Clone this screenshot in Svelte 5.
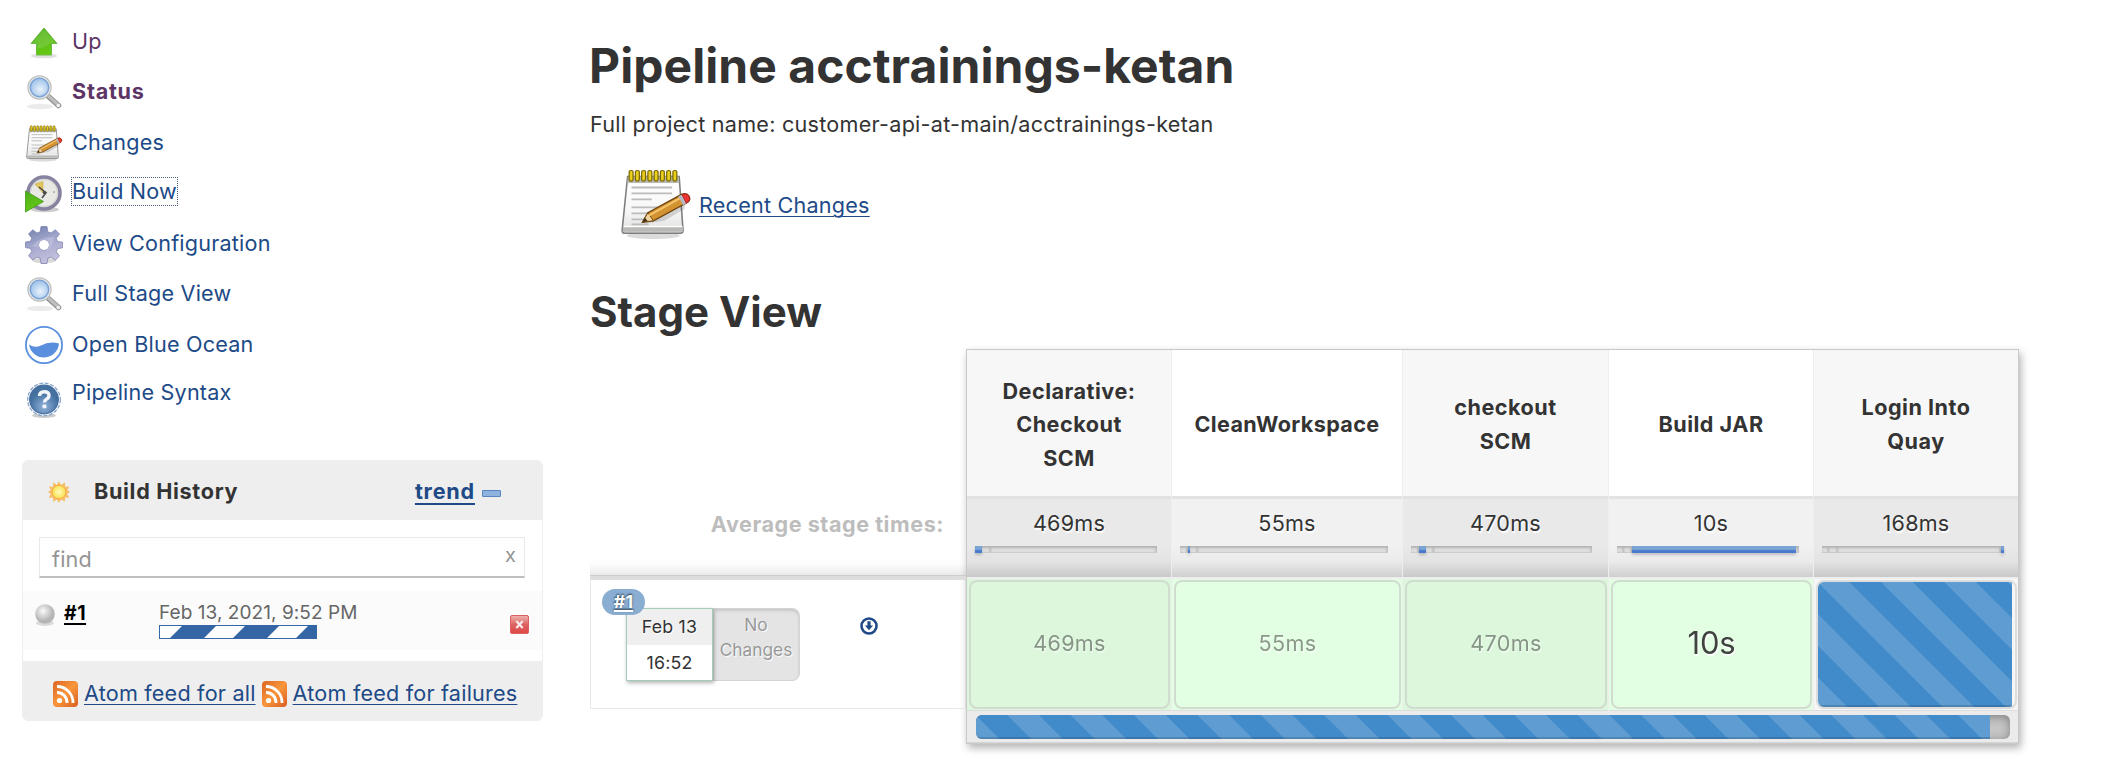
<script>
  const tasks = [
    { label: 'Up', icon: 'up', state: 'visited' },
    { label: 'Status', icon: 'search', state: 'visited current' },
    { label: 'Changes', icon: 'notepad', state: '' },
    { label: 'Build Now', icon: 'clock', state: 'focused' },
    { label: 'View Configuration', icon: 'gear', state: '' },
    { label: 'Full Stage View', icon: 'search', state: '' },
    { label: 'Open Blue Ocean', icon: 'ocean', state: '' },
    { label: 'Pipeline Syntax', icon: 'help', state: '' }
  ];

  // Bar segments: width in pixels; `on` marks the share of the run taken by this stage.
  const stages = [
    { lines: ['Declarative:', 'Checkout', 'SCM'], avg: '469ms', run: '469ms', bar: [{ w: 7, on: true }, { w: 9 }, { w: 166 }] },
    { lines: ['CleanWorkspace'], avg: '55ms', run: '55ms', bar: [{ w: 8 }, { w: 2, on: true }, { w: 8 }, { w: 190 }] },
    { lines: ['checkout', 'SCM'], avg: '470ms', run: '470ms', bar: [{ w: 8 }, { w: 7, on: true }, { w: 8 }, { w: 158 }] },
    { lines: ['Build JAR'], avg: '10s', run: '10s', slow: true, bar: [{ w: 7 }, { w: 8 }, { w: 164, on: true }, { w: 3 }] },
    { lines: ['Login Into', 'Quay'], avg: '168ms', running: true, bar: [{ w: 7 }, { w: 9 }, { w: 163 }, { w: 3, on: true }] }
  ];
  const feeds = ['Atom feed for all', 'Atom feed for failures'];
</script>

{#snippet notepad(width, height)}
  <svg {width} {height} viewBox="0 0 48 48" preserveAspectRatio="none">
    <ellipse cx="22" cy="45" rx="17" ry="2.400" fill="#000" opacity=".14" />
    <path d="M5.500 5h33l2.500 36.500q.2 2-1.800 2H4q-2.200 0-2-2z" fill="url(#paper)" stroke="#7e7e7b" />
    <path d="M5.700 5h32.500l.3 4.500H5.300z" fill="#b8b8b4" />
    <path d="M2.600 38.500h38.200l.2 4H2.300z" fill="#b9bab7" />
    <path d="M3 38.800h37.500" stroke="#fff" />
    <g stroke="#bcbcba" stroke-width="1.200"><path d="M8 12.500h26M8 16.500h26M8 20.500h13M8 26h24M8 30h20M8 34h14M8 37.500h11" /></g>
    <g fill="#e9cf1e" stroke="#7d6900" stroke-width=".8">
      {#each [7.5, 11.5, 15.5, 19.5, 23.5, 27.5, 31.5, 35.5] as x}
        <rect x={x - 1} y="1" width="2.500" height="7.200" rx="1.250" />
      {/each}
    </g>
    <path d="M16 37l5-3 18-9 4-4-1 6-13 8z" fill="#000" opacity=".14" />
    <path d="M15 36l3.500-6.500L40 17.200q2.800-1.400 4.600.9 1.500 2.500-.6 4.400L22 35z" fill="#d39332" stroke="#70450d" stroke-width=".9" />
    <path d="M15 36l3.500-6.500 3.500 5.500z" fill="#efd3a0" stroke="#70450d" stroke-width=".6" />
    <path d="M15 36l1.600-3 1.700 2.200z" fill="#3c2a13" />
    <path d="M19 31.500L39.500 19.500" stroke="#f4c36a" stroke-width="1.400" />
    <path d="M38 18.500l3 6 2.200-1.300-3-5.800z" fill="#b6bac4" />
    <path d="M40.300 17.200q2.800-1.300 4.400.9 1.400 2.600-.8 4.500l-.9.5z" fill="#ec3434" stroke="#a32018" stroke-width=".5" />
  </svg>
{/snippet}

{#snippet taskIcon(name)}
  {#if name === 'notepad'}
    {@render notepad(39, 37)}
  {:else}
    <svg width="38" height="38" viewBox="0 0 38 38">
      {#if name === 'up'}
        <ellipse cx="19" cy="32" rx="13" ry="2.300" fill="#000" opacity=".12" />
        <path d="M19 4L32 19.500h-5.500V31h-15V19.500H6z" fill="url(#green)" stroke="#6cbb45" stroke-width="1" />
        <path d="M19 5.600L8.200 18.500h4.300v6q9-1 13-6h4.300z" fill="#fff" opacity=".13" />
      {:else if name === 'search'}
        <ellipse cx="15" cy="32.500" rx="13" ry="2.800" fill="#000" opacity=".08" />
        <path d="M24 23L33.500 31.500" stroke="#969897" stroke-width="5.600" stroke-linecap="round" />
        <path d="M24 22.700L33.500 31.200" stroke="#bfc0be" stroke-width="3" stroke-linecap="round" />
        <circle cx="33.300" cy="31.500" r="1.800" fill="#f1f1f1" />
        <circle cx="14.500" cy="13.500" r="11.600" fill="#e4e6e5" stroke="#bdbfbe" stroke-width="1.200" />
        <circle cx="14.500" cy="13.500" r="9.200" fill="url(#lens)" stroke="#7ba3d6" stroke-width="1.500" />
      {:else if name === 'clock'}
        <ellipse cx="20" cy="34.500" rx="14" ry="2.800" fill="#000" opacity=".2" />
        <circle cx="19" cy="18" r="16" fill="#e8e8e4" stroke="#85839f" stroke-width="3.600" />
        <circle cx="19" cy="18" r="13.600" fill="none" stroke="#d1d1cd" />
        <path d="M10 9l8-2.500V18z" fill="#e2c65c" stroke="#c4aa4e" stroke-width=".6" />
        <path d="M14 12l6.500 5.500M17 23l4.500-6" stroke="#4c4c4c" stroke-width="1.600" />
        <circle cx="19.500" cy="17.500" r="1.700" fill="#4c4c4c" />
        <circle cx="29" cy="17" r="1" fill="#aaa" />
        <path d="M.5 16L18.500 26.500.5 37z" fill="url(#green)" stroke="#3f9616" stroke-width=".8" />
      {:else if name === 'gear'}
        <ellipse cx="19" cy="34.500" rx="12" ry="2.800" fill="#000" opacity=".15" />
        <g fill="url(#steel)" stroke="#7f85ae" stroke-width=".8">
          <path fill-rule="evenodd" d="M16 .5h6l.8 5.300 3.200 1.300 4.300-3.300 4.200 4.200-3.300 4.300 1.300 3.200 5.100.7v5.600l-5.100.8-1.300 3.200 3.300 4.200-4.200 4.200-4.300-3.200-3.200 1.300-.8 5.200h-6l-.8-5.200-3.200-1.300L7.700 34l-4.200-4.200 3.300-4.200-1.300-3.200-5-.8V16l5-.7 1.300-3.200L3.500 8l4.200-4.200L12 7.100l3.200-1.300zM19 13.800a5.200 5.200 0 1 0 0 10.400 5.200 5.200 0 0 0 0-10.400z" />
        </g>
        <path d="M7 20q7-9 22-9 0 11-12 17 6-3 5-5" fill="#fff" opacity=".2" />
        <circle cx="19" cy="19" r="4.800" fill="#fff" />
      {:else if name === 'ocean'}
        <circle cx="19" cy="19" r="18.100" fill="#fff" stroke="#5a8fde" stroke-width="1.800" />
        <path d="M4 18.500q5.500 3.800 12 1Q24.500 14.800 34 17.500A15.100 15.100 0 0 1 4 18.500z" fill="#5a8fde" />
      {:else}
        <ellipse cx="19" cy="34.500" rx="12" ry="2.500" fill="#000" opacity=".2" />
        <circle cx="19" cy="18.500" r="16.300" fill="#fff" stroke="#86a4ca" stroke-width="1.300" stroke-dasharray="4 1.500" />
        <circle cx="19" cy="18.500" r="14.300" fill="url(#help)" stroke="#416a9e" stroke-width="1.200" />
        <path d="M14.500 15q0-4.300 4.800-4.300 4.700 0 4.700 3.800 0 2.500-2.600 3.800-1.900 1-1.900 3.200" fill="none" stroke="#f2f6fb" stroke-width="3.400" />
        <rect x="17.500" y="23.600" width="3.900" height="3.700" rx=".8" fill="#f2f6fb" />
      {/if}
    </svg>
  {/if}
{/snippet}

<svg class="defs" width="0" height="0" aria-hidden="true">
  <defs>
    <linearGradient id="paper" x2="0" y2="1"><stop offset="0" stop-color="#fff" /><stop offset=".6" stop-color="#f7f7f7" /><stop offset="1" stop-color="#dedede" /></linearGradient>
    <linearGradient id="green" x2=".3" y2="1"><stop offset="0" stop-color="#4caf1e" /><stop offset="1" stop-color="#66c814" /></linearGradient>
    <radialGradient id="lens" cx=".55" cy=".6"><stop offset="0" stop-color="#e9f2fb" /><stop offset="1" stop-color="#a9c9ec" /></radialGradient>
    <linearGradient id="steel" x2=".4" y2="1"><stop offset="0" stop-color="#6d7ca8" /><stop offset=".5" stop-color="#a1a6cc" /><stop offset="1" stop-color="#c3bfdc" /></linearGradient>
    <radialGradient id="help" cy=".75"><stop offset="0" stop-color="#8fb1da" /><stop offset="1" stop-color="#44719f" /></radialGradient>
    <radialGradient id="sun"><stop offset="0" stop-color="#fffbc0" /><stop offset="1" stop-color="#f9e04c" /></radialGradient>
    <radialGradient id="ball" cx=".4" cy=".35"><stop offset="0" stop-color="#fafafa" /><stop offset="1" stop-color="#b5b5b5" /></radialGradient>
    <linearGradient id="rss" y2="1"><stop offset="0" stop-color="#dc6425" /><stop offset=".5" stop-color="#f9963a" /><stop offset="1" stop-color="#d95c22" /></linearGradient>
    <linearGradient id="stop" x2="0" y2="1"><stop offset="0" stop-color="#f0b4b0" /><stop offset=".5" stop-color="#dc6464" /><stop offset="1" stop-color="#e04747" /></linearGradient>
  </defs>
</svg>

<div class="page">
  <aside>
    <nav>
      {#each tasks as task}
        <a class="task {task.state} {task.icon}" href="#top">
          {@render taskIcon(task.icon)}
          <span>{task.label}</span>
        </a>
      {/each}
    </nav>

    <section class="history">
      <header>
        <svg width="24" height="24" viewBox="0 0 24 24">
          <path d="M12 1l2 4 4-2.700.3 4.400 4.200-.2-2.100 3.800L23 12l-2.900 1.900 2.200 3.800-4.100-.1-.4 4.100-3.800-2.200L12 23l-2-3.500-3.800 2.200-.4-4.100-4.100.1 2-3.800L1 12l2.900-1.800-2.100-3.700 4.200.2L6.300 2.300 10 5z" fill="#f8bd68" />
          <circle cx="12" cy="12" r="6.800" fill="url(#sun)" stroke="#f3b04c" stroke-width="1" />
        </svg>
        <h2>Build History</h2>
        <a class="trend" href="#trend">trend</a>
        <i class="collapse"></i>
      </header>
      <div class="find"><span>find</span><b>x</b></div>
      <div class="build">
        <svg class="ball" width="22" height="24" viewBox="0 0 22 24">
          <ellipse cx="11" cy="20" rx="9" ry="3" fill="#000" opacity=".13" />
          <circle cx="11" cy="11" r="9.800" fill="url(#ball)" />
        </svg>
        <a class="num" href="#1">#1</a>
        <div class="when">
          <span>Feb 13, 2021, 9:52 PM</span>
          <svg width="158" height="14" viewBox="0 0 158 14">
            <path d="M0 0h158v14H0z" fill="#3465a4" />
            <path d="M1 1h22L11 13H1zM57 1h29L74 13H45zM120 1h29l-12 12h-29z" fill="#fff" />
          </svg>
        </div>
        <svg class="stop" width="19" height="19" viewBox="0 0 19 19">
          <rect x=".5" y=".5" width="18" height="18" rx="1.500" fill="url(#stop)" stroke="#d9615f" />
          <path d="M6.300 6l6.400 7M12.700 6l-6.400 7" stroke="#fbeaea" stroke-width="2.200" />
        </svg>
      </div>
      <footer>
        {#each feeds as feed}
          <svg width="25" height="26" viewBox="0 0 25 26">
            <rect width="25" height="26" rx="4" fill="url(#rss)" />
            <circle cx="6.500" cy="19.500" r="2.600" fill="#fff" />
            <path d="M4 11.500A9.800 9.800 0 0 1 14 22M4 5.500A16 16 0 0 1 20 22" fill="none" stroke="#fff" stroke-width="2.800" />
          </svg>
          <a href="#feed">{feed}</a>
        {/each}
      </footer>
    </section>
  </aside>

  <main>
    <h1>Pipeline acctrainings-ketan</h1>
    <p class="full">Full project name: customer-api-at-main/acctrainings-ketan</p>
    <div class="recent">
      {@render notepad(75, 71)}
      <a href="#changes">Recent Changes</a>
    </div>
    <h2 class="heading">Stage View</h2>

    <div class="view">
      <div class="left">
        <div class="avglabel">Average stage times:</div>
        <div class="run">
          <div class="stamp"><span class="day">Feb 13</span><span>16:52</span></div>
          <div class="nochange"><span>No</span><span>Changes</span></div>
          <svg width="18" height="18" viewBox="0 0 18 18">
            <circle cx="9" cy="9" r="7.500" fill="none" stroke="#204a87" stroke-width="2.600" />
            <path d="M7.400 4.300h3.200v4.200h2.500L9 13.300 4.900 8.500h2.500z" fill="#204a87" />
          </svg>
          <a class="badge" href="#1">#1</a>
        </div>
      </div>
      <div class="stages">
        <div class="cols">
          {#each stages as s}
            <div class="col">
              <div class="name">{#each s.lines as line}<span>{line}</span>{/each}</div>
              <div class="avg">
                <span>{s.avg}</span>
                <div class="bar">
                  {#each s.bar as seg}<i class:on={seg.on} style="width:{seg.w}px"></i>{/each}
                </div>
              </div>
              <div class="cell" class:running={s.running}>
                <div class="box" class:slow={s.slow}>
                  {#if s.running}<div class="stripes"></div>{:else}<span>{s.run}</span>{/if}
                </div>
              </div>
            </div>
          {/each}
        </div>
        <div class="total"><div class="track"><div class="stripes"></div></div></div>
      </div>
    </div>
  </main>
</div>

<style>
  :global(body) { background: #fff; overflow: hidden; }
  .defs { position: absolute; }
  .page {
    display: flex; box-sizing: border-box; width: 2128px; height: 782px; padding-left: 22px;
    font: 21.6px/34px Inter, "Liberation Sans", sans-serif; letter-spacing: .2px; color: #333;
  }
  .page :is(div, nav, header, footer, section, span) { box-sizing: border-box; }
  svg { display: block; flex: none; }
  h1, h2, p { margin: 0; }
  a { color: #204a87; }
  aside { width: 521px; flex: none; }

  nav { height: 460px; padding: 24px 0 0 3px; }
  .task { display: flex; align-items: flex-start; gap: 9px; height: 50.4px; text-decoration: none; }
  .task.notepad { gap: 8px; }
  .task.visited { color: #5c3566; }
  .task.current { font-weight: 700; letter-spacing: .75px; }
  .task.ocean span { margin-top: 1px; }
  .task.help { margin-top: -2px; }
  .task.help svg { margin-top: 6px; }
  .task.focused span { margin: 2px 0 0 -1px; line-height: 27px; border: 1px dotted #48597c; }

  .history { height: 261px; border: 1px solid #eee; border-radius: 6px; overflow: hidden; display: flex; flex-direction: column; }
  .history header { display: flex; align-items: center; flex: none; height: 59px; padding: 0 41px 0 24px; background: #eee; }
  .history header svg { margin-top: 3px; }
  .history h2 { margin: 0 auto 0 23px; font-size: 21.6px; line-height: 34px; letter-spacing: .68px; }
  .trend { font-weight: 700; letter-spacing: .8px; text-decoration-thickness: 2px; text-underline-offset: 4px; }
  .collapse { width: 17px; height: 5px; margin: 5px 0 0 7px; border: 1px solid #5785be; background: #8fb3df; border-radius: 1px; }
  .find {
    display: flex; justify-content: space-between; flex: none; height: 41px; margin: 17px 17px 13px 16px; padding: 0 8px 0 12px;
    line-height: 42px; color: #949494; border: 1px solid #e9e9e9; border-bottom: 2px solid #bfbfbf;
  }
  .find b { font-weight: 400; font-size: 20px; line-height: 34px; }
  .build { display: flex; align-items: flex-start; flex: none; height: 59px; padding-left: 11px; background: #fbfbfb; }
  .ball { margin-top: 12px; }
  .num { width: 75px; margin: 9px 0 0 8px; font-size: 19.5px; line-height: 26px; font-weight: 700; letter-spacing: .5px; color: #000; text-decoration-thickness: 2px; text-underline-offset: 3px; }
  .when { display: flex; flex-direction: column; margin: 10px auto 0 20px; font-size: 19px; line-height: 24px; letter-spacing: .06px; color: #666; }
  .when span { height: 24px; }
  .stop { margin: 24px 13px 0 0; }
  footer { display: flex; align-items: center; margin-top: 11px; height: 60px; padding: 6px 0 0 30px; background: #eee; flex: none; }
  footer a { margin: 0 6px; letter-spacing: .2px; text-decoration-thickness: 1px; text-underline-offset: 3px; line-height: 30px; padding-bottom: 3px; }

  main { margin-left: 47px; padding-top: 36px; }
  h1 { margin-left: -1px; font-size: 48px; line-height: 59px; letter-spacing: .06px; }
  .full { margin-top: 14.700px; line-height: 28px; letter-spacing: .25px; }
  .recent { display: flex; align-items: center; height: 71px; margin: 31.300px 0 0 29px; gap: 5px; }
  .recent a { margin-top: 2px; letter-spacing: .22px; text-decoration-thickness: 1px; text-underline-offset: 3px; }
  .heading { margin-top: 46.400px; font-size: 42px; line-height: 50px; padding-top: 1px; letter-spacing: 0; }

  .view { display: flex; margin-top: 11.600px; }
  .left { width: 376px; padding-top: 149px; }
  .avglabel {
    height: 78px; padding: 9px 22px 0 0; text-align: right; font-weight: 700; letter-spacing: .53px; color: #bdbdbd;
    background: linear-gradient(#fff 76%, #fbfbfb 86%, #e9e9e9);
  }
  .run { position: relative; display: flex; height: 133px; padding: 28px 0 0 35px; border: 1px solid #e8e8e8; border-top: 4px solid #ddd; border-right-color: #ddd; box-shadow: 0 -1px 0 #ccc; }
  .run svg { margin: 9px 0 0 60px; }
  .stamp { width: 87px; height: 73px; border: 1px solid #a4ccb6; box-shadow: 1px 2px 4px rgba(0, 0, 0, .3); z-index: 1; background: #fff; }
  .stamp span { display: block; font-size: 17.800px; line-height: 35px; text-align: center; }
  .stamp .day { height: 36px; background: #efefef; text-shadow: 1px 1px 1px #fff; }
  .nochange { width: 87px; height: 73px; padding-top: 3px; border: 1px solid #d3d3d3; border-left: 0; border-radius: 0 8px 8px 0; background: #e4e4e4; box-shadow: inset 0 2px 3px rgba(0, 0, 0, .13); }
  .nochange span { display: block; font-size: 17.300px; line-height: 25px; letter-spacing: 0; text-align: center; color: #999; text-shadow: 1px 1px 1px #fff; }
  .badge {
    position: absolute; left: 11px; top: 9px; z-index: 2; width: 43px; height: 26px; border-radius: 13px; background: #8aadd2;
    color: #fff; font-size: 17.500px; line-height: 25px; font-weight: 700; text-align: center; text-shadow: 0 -1px 2px #234;
    text-decoration-thickness: 2px; text-underline-offset: 2px;
  }

  .stages { width: 1053px; height: 395px; border: 1px solid #c9c9c9; background: #ebebeb; box-shadow: 2px 4px 8px rgba(0, 0, 0, .3); }
  .cols { display: grid; grid-template-columns: 204px 231px 206px 205px 205px; height: 361px; }
  .col { background: #fff; }
  .col + .col { border-left: 1px solid #eee; }
  .col:nth-child(odd) { background: #f7f7f7; }
  .name { display: flex; flex-direction: column; justify-content: center; height: 149px; padding-top: 4px; border-bottom: 3px solid #e2e2e2; font-weight: 700; line-height: 33.500px; letter-spacing: .5px; text-align: center; }
  .col:nth-child(2) .name { letter-spacing: .35px; }
  .avg { height: 78px; padding: 7px 15px 0 8px; background: linear-gradient(#f1f1f1 60%, #ebebeb 80%, #cfcfcf); }
  .col:nth-child(odd) .avg { background: linear-gradient(#e9e9e9 60%, #e3e3e3 80%, #c9c9c9); }
  .avg span { display: block; margin-right: -7px; text-align: center; text-shadow: 1px 2px 1px #fff; line-height: 34px; }
  .bar { display: flex; height: 7px; margin-top: 6px; }
  .bar i { flex: none; background: #dedede; box-shadow: inset 0 2px 2px #b5b5b5, inset 0 -1px 0 #ccc, inset -2px 0 2px #c6c6c6; }
  .bar .on { background: #7ba5d5; box-shadow: inset 0 -3px 1px #4a7ace, 0 2px 3px rgba(0, 0, 0, .2); }
  .cell { height: 134px; padding: 1px 1px 2px 2px; border-top: 2px solid #eee; border-bottom: 1px solid #ddd; background: #e3ffe3; }
  .col:nth-child(odd) .cell { background: #dcf7dc; }
  .col .cell.running, .col:nth-child(odd) .cell.running { background: #f5f5f5; }
  .box { display: flex; align-items: center; justify-content: center; height: 129px; border: 2px solid #d0dcd0; border-radius: 8px; }
  .box span { margin-top: -2px; opacity: .5; text-shadow: 1px 2px 1px #fff; letter-spacing: .3px; }
  .box.slow span { opacity: .92; font-size: 31px; letter-spacing: -.2px; }
  .running .box { display: block; border-color: #ddd; overflow: hidden; }
  .stripes {
    height: 100%; background-color: #428bca; background-size: 63.400px 63.400px; box-shadow: inset 0 -2px 0 rgba(0, 0, 0, .15);
    background-image: linear-gradient(45deg, rgba(255, 255, 255, .15) 25%, transparent 25%, transparent 50%, rgba(255, 255, 255, .15) 50%, rgba(255, 255, 255, .15) 75%, transparent 75%);
  }
  .running .stripes { width: 194px; }
  .total { height: 32px; padding: 4px 8px 4px 9px; border-bottom: 1px solid #d6d6d6; }
  .track { height: 24px; border-radius: 6px; overflow: hidden; background: #c5c5c5; box-shadow: inset 0 2px 10px rgba(0, 0, 0, .35); }
  .track .stripes { width: 1014px; background-position: 31.700px 0; }
</style>
